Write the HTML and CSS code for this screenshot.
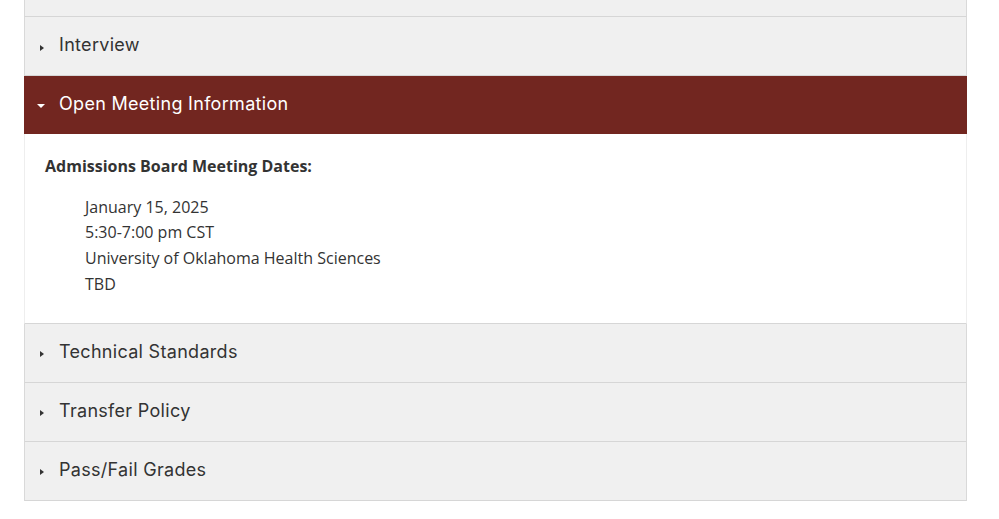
FILE: index.html
```html
<!DOCTYPE html>
<html>
<head>
<meta charset="utf-8">
<link rel="stylesheet" href="styles.css">
</head>
<body>
<div class="accordion">
  <div class="item partial"></div>
  <div class="item">
    <div class="head"><span class="tri right"></span><span class="label">Interview</span></div>
  </div>
  <div class="item open">
    <div class="head"><span class="tri down"></span><span class="label">Open Meeting Information</span></div>
    <div class="body">
      <p class="title">Admissions Board Meeting Dates:</p>
      <div class="details">
        <div>January 15, 2025</div>
        <div>5:30-7:00 pm CST</div>
        <div>University of Oklahoma Health Sciences</div>
        <div>TBD</div>
      </div>
    </div>
  </div>
  <div class="item">
    <div class="head"><span class="tri right"></span><span class="label">Technical Standards</span></div>
  </div>
  <div class="item">
    <div class="head"><span class="tri right"></span><span class="label">Transfer Policy</span></div>
  </div>
  <div class="item last">
    <div class="head"><span class="tri right"></span><span class="label">Pass/Fail Grades</span></div>
  </div>
</div>
</body>
</html>
```

FILE: styles.css
```css
html, body {
  margin: 0;
  padding: 0;
  background: #ffffff;
}
.accordion {
  margin-left: 24px;
  width: 943px;
  display: flex;
  flex-direction: column;
}
.item {
  background: #f0f0f0;
  border-left: 1px solid #d9d9d9;
  border-right: 1px solid #d9d9d9;
  border-bottom: 1px solid #d6d6d6;
}
.item.partial {
  height: 16px;
}
.head {
  height: 58px;
  display: flex;
  align-items: center;
  padding-left: 14px;
  padding-bottom: 3px;
  font-family: Inter, "Liberation Sans", sans-serif;
  font-size: 18px;
  letter-spacing: 0.3px;
  color: #333333;
  box-sizing: border-box;
}
.label {
  margin-left: 15px;
}
.tri {
  width: 0;
  height: 0;
  display: inline-block;
}
.tri.right {
  margin-left: 1px;
  margin-top: 6px;
  border-top: 3.5px solid transparent;
  border-bottom: 3.5px solid transparent;
  border-left: 4px solid #333333;
}
.tri.down {
  margin-top: 4px;
  border-left: 4px solid transparent;
  border-right: 4px solid transparent;
  border-top: 4px solid #ffffff;
}
.item.open {
  background: #ffffff;
  border-left-color: #eeeeee;
  border-right-color: #eeeeee;
}
.item.open .head {
  background: #722620;
  color: #ffffff;
  margin-left: -1px;
  margin-right: -1px;
  padding-left: 13px;
  height: 58px;
}
.item.open .label {
  margin-left: 14px;
}
.body {
  padding: 20px 20px 25px 20px;
  font-family: "Open Sans", sans-serif;
  font-size: 16px;
  color: #333333;
  line-height: 25.7px;
}
.title {
  margin: 0 0 15px 0;
  font-weight: 700;
}
.details {
  padding-left: 40px;
}
```
